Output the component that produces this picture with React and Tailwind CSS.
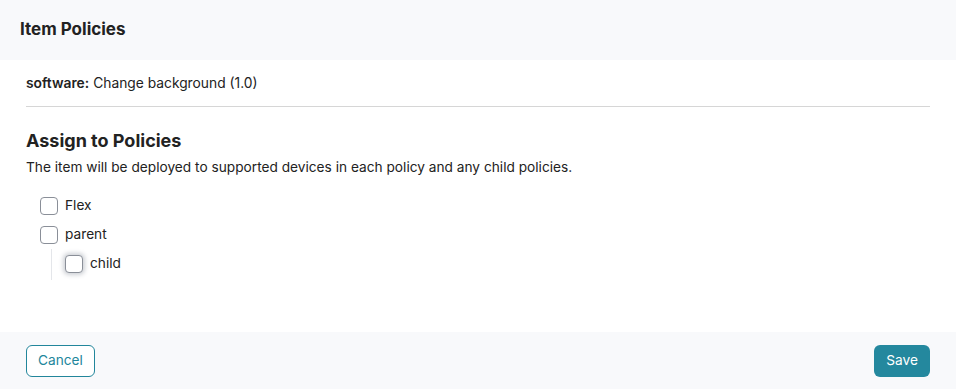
import React from 'react';

const Box = ({ focused }) => (
  <span
    className={`w-[18px] h-[18px] rounded-[4px] border border-[#8a8f98] bg-white shrink-0 ${
      focused ? 'shadow-[0_0_4px_2px_rgba(60,70,90,0.25)]' : ''
    }`}
  />
);

const Option = ({ label, focused }) => (
  <label className="flex items-center gap-[7px] h-[29px]">
    <Box focused={focused} />
    <span className="text-[13.7px] text-[#222]">{label}</span>
  </label>
);

const App = () => {
  return (
    <div className="w-[956px] h-[389px] bg-white flex flex-col font-['Inter',sans-serif] text-[#222]">
      {/* Header */}
      <div className="h-[60px] bg-[#f8f9fb] flex items-center px-5 shrink-0">
        <h2 className="text-[17px] font-bold text-[#222]">Item Policies</h2>
      </div>

      {/* Body */}
      <div className="flex-grow px-[26px]">
        <div className="h-[47px] flex items-center border-b border-[#d6d6d6] text-[13.8px]">
          <span className="font-semibold mr-1">software:</span>
          Change background (1.0)
        </div>
        <h3 className="text-[18px] font-bold mt-[21px] leading-[26px]">Assign to Policies</h3>
        <p className="text-[13.7px] mt-[3px] leading-[20px]">
          The item will be deployed to supported devices in each policy and any child policies.
        </p>
        <div className="mt-[14px] pl-[14px]">
          <Option label="Flex" />
          <Option label="parent" />
          <div className="ml-[11px] border-l border-[#e4e6ea] pl-[13px] pb-[2px]">
            <Option label="child" focused />
          </div>
        </div>
      </div>

      {/* Footer */}
      <div className="h-[57px] bg-[#f8f9fb] flex items-center justify-between px-[26px] shrink-0">
        <button className="h-[32px] px-[11px] rounded-[6px] border border-[#22869b] text-[#22869b] text-[13.7px] bg-white">
          Cancel
        </button>
        <button className="h-[32px] px-[12px] rounded-[6px] bg-[#24889e] text-white text-[13.7px]">
          Save
        </button>
      </div>
    </div>
  );
};

export default App;
